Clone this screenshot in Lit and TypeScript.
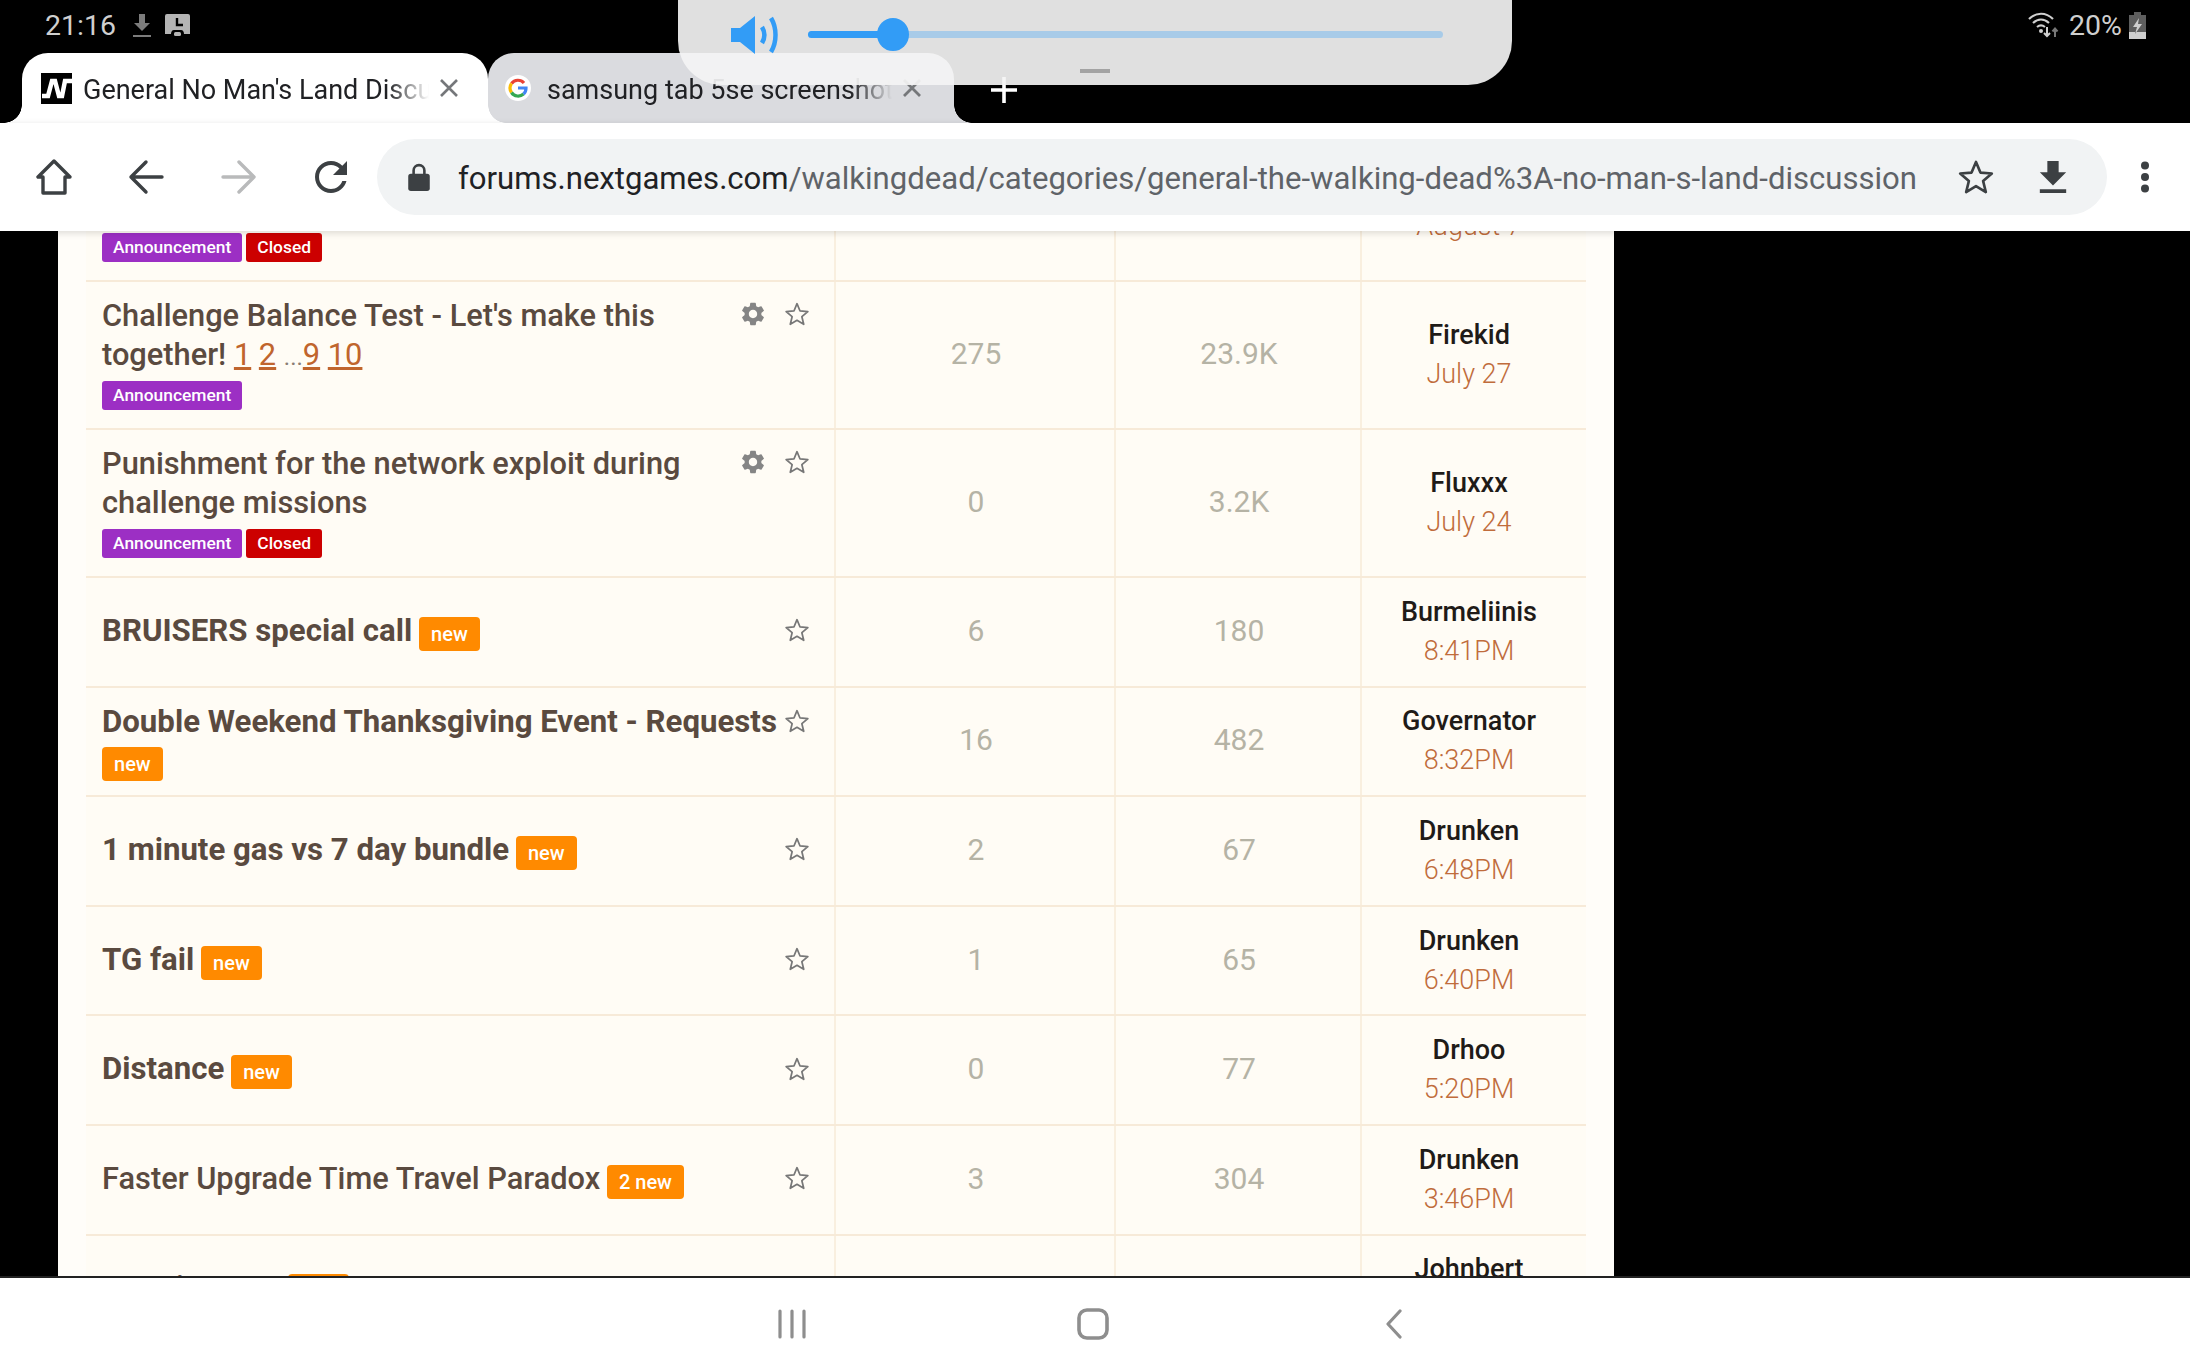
import { LitElement, html, css } from 'lit'
import { customElement } from 'lit/decorators.js'

const star = html`<svg class="star" viewBox="0 0 24 24"><polygon points="12,2.5 14.8,9.2 22,9.8 16.5,14.5 18.2,21.5 12,17.8 5.8,21.5 7.5,14.5 2,9.8 9.2,9.2" fill="none" stroke="currentColor" stroke-width="1.6" stroke-linejoin="round"/></svg>`
const gear = html`<svg class="gear" viewBox="0 0 24 24"><path fill="currentColor" d="M19.14 12.94c.04-.3.06-.61.06-.94 0-.32-.02-.64-.07-.94l2.03-1.58a.49.49 0 0 0 .12-.61l-1.92-3.32a.488.488 0 0 0-.59-.22l-2.39.96c-.5-.38-1.03-.7-1.62-.94l-.36-2.54a.484.484 0 0 0-.48-.41h-3.84c-.24 0-.43.17-.47.41l-.36 2.54c-.59.24-1.13.57-1.62.94l-2.39-.96c-.22-.08-.47 0-.59.22L2.74 8.87c-.12.21-.08.47.12.61l2.03 1.58c-.05.3-.09.63-.09.94s.02.64.07.94l-2.03 1.58a.49.49 0 0 0-.12.61l1.92 3.32c.12.22.37.29.59.22l2.39-.96c.5.38 1.03.7 1.62.94l.36 2.54c.05.24.24.41.48.41h3.84c.24 0 .44-.17.47-.41l.36-2.54c.59-.24 1.13-.56 1.62-.94l2.39.96c.22.08.47 0 .59-.22l1.92-3.32c.12-.22.07-.47-.12-.61l-2.01-1.58zM12 15.6c-1.98 0-3.6-1.62-3.6-3.6s1.62-3.6 3.6-3.6 3.6 1.62 3.6 3.6-1.62 3.6-3.6 3.6z"/></svg>`

const pages = html` <a>1</a> <a>2</a> <span class="dots">...</span><a>9</a> <a>10</a>`

const rows = [
  { title: 'Update notes for the August event and what is coming up next in game', weight: 'reg', tags: ['a', 'c'], gear: true, tall: true, views: '41', reads: '5.1K', user: 'Fluxxx', when: 'August 7' },
  { title: 'Challenge Balance Test - Let\'s make this together!', pages: true, weight: 'reg', tags: ['a'], gear: true, tall: true, views: '275', reads: '23.9K', user: 'Firekid', when: 'July 27' },
  { title: 'Punishment for the network exploit during challenge missions', weight: 'reg', tags: ['a', 'c'], gear: true, tall: true, views: '0', reads: '3.2K', user: 'Fluxxx', when: 'July 24' },
  { title: 'BRUISERS special call', weight: 'bold', badge: 'new', views: '6', reads: '180', user: 'Burmeliinis', when: '8:41PM' },
  { title: 'Double Weekend Thanksgiving Event - Requests', weight: 'bold', badge: 'new', views: '16', reads: '482', user: 'Governator', when: '8:32PM' },
  { title: '1 minute gas vs 7 day bundle', weight: 'bold', badge: 'new', views: '2', reads: '67', user: 'Drunken', when: '6:48PM' },
  { title: 'TG fail', weight: 'bold', badge: 'new', views: '1', reads: '65', user: 'Drunken', when: '6:40PM' },
  { title: 'Distance', weight: 'bold', badge: 'new', views: '0', reads: '77', user: 'Drhoo', when: '5:20PM' },
  { title: 'Faster Upgrade Time Travel Paradox', weight: 'reg', badge: '2 new', views: '3', reads: '304', user: 'Drunken', when: '3:46PM' },
  { title: 'Morning Gas', weight: 'bold', badge: 'new', views: '12', reads: '312', user: 'Johnbert', when: '2:58PM' }
]

@customElement('app-root')
export class AppRoot extends LitElement {
  static styles = css`
    :host {
      display: flex;
      flex-direction: column;
      position: relative;
      width: 2190px;
      height: 1369px;
      overflow: hidden;
      background: #000;
      font-family: Roboto, 'Liberation Sans', sans-serif;
    }

    svg {
      display: block;
      flex: none;
    }

    .status {
      display: flex;
      align-items: center;
      height: 53px;
      padding: 0 44px 3px 45px;
      box-sizing: border-box;
      color: #cfcfcf;
      font-size: 28.5px;
    }

    .status .dl {
      margin-left: 16px;
    }

    .status .shot {
      margin-left: 13px;
    }

    .status .right {
      margin-left: auto;
      display: flex;
      align-items: center;
      gap: 7px;
    }

    .volume {
      position: absolute;
      left: 678px;
      top: 0;
      width: 834px;
      height: 85px;
      border-radius: 0 0 44px 44px;
      background: rgba(244, 244, 244, 0.918);
      z-index: 3;
    }

    .volume .speaker {
      position: absolute;
      left: 53px;
      top: 15px;
    }

    .volume .track {
      position: absolute;
      left: 130px;
      top: 31px;
      width: 635px;
      height: 7px;
      border-radius: 4px;
      background: #a8cbe8;
    }

    .volume .fill {
      height: 100%;
      border-radius: 4px;
      background: #329cf6;
    }

    .volume .thumb {
      position: absolute;
      left: 69px;
      top: -13px;
      width: 32px;
      height: 33px;
      border-radius: 50%;
      background: #329cf6;
    }

    .volume .grip {
      position: absolute;
      left: 402px;
      top: 69px;
      width: 30px;
      height: 4px;
      background: #a3a3a3;
    }

    .tabs {
      display: flex;
      height: 70px;
      padding-left: 22px;
    }

    .tab {
      position: relative;
      display: flex;
      align-items: center;
      box-sizing: border-box;
      border-radius: 26px 26px 0 0;
      color: #202124;
      font-size: 27px;
    }

    .tab.active {
      width: 466px;
      padding: 0 29px 0 19px;
      background: #fff;
      z-index: 1;
    }

    .tab::after {
      content: '';
      position: absolute;
      bottom: 0;
      right: -18px;
      width: 18px;
      height: 18px;
      transform: scaleX(-1);
      background: radial-gradient(circle at 0 0, transparent 17.5px, #dadbdf 18px);
    }

    .tab.active::before {
      content: '';
      position: absolute;
      bottom: 0;
      left: -18px;
      width: 18px;
      height: 18px;
      background: radial-gradient(circle at 0 0, transparent 17.5px, #fff 18px);
    }

    .tab.active::after {
      background: radial-gradient(circle at 0 0, transparent 17.5px, #fff 18px);
    }

    .tab.other {
      width: 466px;
      padding: 0 32px 0 17px;
      background: #dadbdf;
    }

    .tab .label {
      flex: 1;
      min-width: 0;
      margin: 4px 0 0 11px;
      white-space: nowrap;
      overflow: hidden;
      -webkit-mask-image: linear-gradient(to right, #000 88%, transparent 100%);
      mask-image: linear-gradient(to right, #000 88%, transparent 100%);
    }

    .tab.other .label {
      margin-left: 16px;
    }

    .tab .close {
      margin-left: 10px;
      color: #75777a;
    }

    .plus {
      margin-left: 37px;
      margin-top: 24px;
    }

    .toolbar {
      position: relative;
      z-index: 2;
      display: flex;
      align-items: center;
      height: 108px;
      padding: 0 0 0 36px;
      box-sizing: border-box;
      background: #fff;
      color: #3c4043;
      box-shadow: 0 2px 7px rgba(0, 0, 0, 0.14);
    }

    .toolbar .nav-icons {
      display: flex;
      gap: 56.4px;
    }

    .omni {
      display: flex;
      align-items: center;
      width: 1730px;
      height: 76px;
      margin-left: 27.800px;
      padding: 0 0 0 29px;
      box-sizing: border-box;
      border-radius: 38px;
      background: #f1f3f4;
    }

    .url {
      margin: 2px 0 0 26px;
      width: 1499.500px;
      font-size: 31.1px;
      color: #5f6368;
      white-space: nowrap;
    }

    .url b {
      font-weight: 400;
      color: #202124;
    }

    .omni .odl {
      margin-left: 44px;
    }

    .kebab {
      margin-left: 33px;
    }

    .content {
      flex: 1;
      min-height: 0;
      overflow: hidden;
    }

    .page {
      width: 1556px;
      margin: -97px 0 0 58px;
      padding: 0 28px;
      box-sizing: border-box;
      background: #fffdf9;
    }

    .row {
      display: grid;
      grid-template-columns: 750px 280px 246px 224px;
      height: 109.6px;
      box-sizing: border-box;
      background: #fffcf5;
      border-bottom: 2px solid #f7ead8;
    }

    .row.tall {
      height: 148px;
    }

    .cell {
      display: flex;
      align-items: center;
      justify-content: center;
      padding: 0 0 3px 2px;
      box-sizing: border-box;
      border-right: 2px solid #f9efdf;
      color: #b5b3a5;
      font-size: 30px;
      font-weight: 400;
    }

    .cell.topic {
      justify-content: flex-start;
      padding: 0 24px 3px 16px;
      gap: 6px;
      align-items: center;
    }

    .row.tall .cell.topic {
      align-items: flex-start;
      padding-top: 14px;
    }

    .row.tall .acts {
      margin-top: -2px;
    }

    .row.wraps .cell.topic {
      align-items: flex-start;
      padding-top: 14px;
    }

    .cell.last {
      flex-direction: column;
      border-right: none;
      padding: 0 10px 0 0;
      line-height: 39px;
      font-size: 27px;
    }

    .user {
      color: #1f1b18;
      font-weight: 500;
    }

    .when {
      color: #c06c3c;
      font-weight: 300;
    }

    .main {
      flex: 1;
      min-width: 0;
      color: #5a4a3f;
      line-height: 39px;
    }

    .main.reg {
      font-size: 30.8px;
      font-weight: 500;
    }

    .main.bold {
      font-size: 31.2px;
      font-weight: 700;
    }

    .main a {
      color: #c0652d;
      font-weight: 400;
      text-decoration: underline;
    }

    .main .dots {
      font-size: 24px;
      font-weight: 400;
      line-height: 0;
      color: #8a7d73;
    }

    .tags {
      display: flex;
      gap: 4px;
      margin-top: 7px;
    }

    .tag {
      height: 29px;
      padding: 0 11px;
      border-radius: 3px;
      color: #fff;
      font-size: 17.4px;
      font-weight: 500;
      line-height: 29px;
    }

    .tag.a {
      background: #9c2fc4;
    }

    .tag.c {
      background: #cc0000;
    }

    .badge {
      display: inline-block;
      height: 34px;
      margin: 0 0 -6px -1px;
      padding: 0 12px;
      border-radius: 4px;
      background: #ff8a00;
      color: #fff;
      font-size: 20px;
      font-weight: 500;
      line-height: 34px;
    }

    .wraps .badge {
      margin-left: 0;
    }

    .acts {
      display: flex;
      align-items: center;
      flex: none;
      gap: 17px;
      height: 39px;
      color: #777;
    }

    .gear {
      width: 28px;
      height: 28px;
      color: #858585;
    }

    .star {
      width: 26px;
      height: 26px;
    }

    .bottom {
      display: grid;
      grid-template-columns: repeat(3, 301px);
      justify-content: center;
      justify-items: center;
      align-items: center;
      height: 93px;
      padding-right: 4px;
      box-sizing: border-box;
      background: #fff;
      border-top: 2px solid #222;
      color: #8e8e8e;
    }
  `

  private renderRow(r: any) {
    return html`
      <div class="row ${r.tall ? 'tall' : ''} ${r.title.startsWith('Double') ? 'wraps' : ''}">
        <div class="cell topic">
          <div class="main ${r.weight}">
            ${r.title}${r.pages ? pages : ''}
            ${r.badge ? html`<span class="badge">${r.badge}</span>` : ''}
            ${r.tags
              ? html`<div class="tags">
                  ${r.tags.map((t: string) => html`<span class="tag ${t}">${t === 'a' ? 'Announcement' : 'Closed'}</span>`)}
                </div>`
              : ''}
          </div>
          <div class="acts">${r.gear ? gear : ''}${star}</div>
        </div>
        <div class="cell">${r.views}</div>
        <div class="cell">${r.reads}</div>
        <div class="cell last">
          <span class="user">${r.user}</span>
          <span class="when">${r.when}</span>
        </div>
      </div>
    `
  }

  render() {
    return html`
      <div class="status">
        <span>21:16</span>
        <svg class="dl" width="20" height="26" viewBox="0 0 20 26">
          <path fill="#7c7c7c" d="M7 2h6v9h5l-8 8-8-8h5zM1 23h18v2H1z" />
        </svg>
        <svg class="shot" width="25" height="22" viewBox="0 0 25 22">
          <path fill="#b4b4b4" d="M2 0h21a2 2 0 0 1 2 2v18h-6c0-2-1-4-3-4H9c-2 0-3 2-3 4H0V2a2 2 0 0 1 2-2z" />
          <path fill="none" stroke="#000" stroke-width="2.4" d="M12 4v7h6" />
          <rect x="9" y="18" width="7" height="4" rx="1.5" fill="#b4b4b4" />
        </svg>
        <div class="right">
          <svg width="34" height="28" viewBox="0 0 34 28" fill="none" stroke="#cfcfcf" stroke-width="2.2">
            <path d="M1 8c7-7 17-7 24 0M5 12c5-4.500 11-4.500 16 0M9 16c2.500-2 5.500-2 8 0" />
            <circle cx="13" cy="20" r="2" fill="#cfcfcf" stroke="none" />
            <path d="M19 16v9M16 22l3 3 3-3" stroke-width="2" />
            <path d="M27 26v-8M24.500 20.500l2.500-3 2.500 3" stroke="#777" stroke-width="2" />
          </svg>
          <span>20%</span>
          <svg width="17" height="27" viewBox="0 0 17 27">
            <path fill="#5e5e5e" d="M5 0h7v3h5v24H0V3h5z" />
            <path fill="#cfcfcf" d="M0 20h17v7H0zM10 6l-6 9h4l-2 7 7-10H9z" />
          </svg>
        </div>
      </div>

      <div class="volume">
        <svg class="speaker" width="50" height="40" viewBox="0 0 50 40">
          <path fill="#329cf6" d="M0 13h9L24 1v38L9 27H0z" />
          <path fill="none" stroke="#329cf6" stroke-width="4.500" d="M31 12c3 5 3 11 0 16M40 3c6 10 6 24 0 34" />
        </svg>
        <div class="track">
          <div class="fill" style="width: 85px"></div>
          <div class="thumb"></div>
        </div>
        <div class="grip"></div>
      </div>

      <div class="tabs">
        <div class="tab active">
          <svg width="31" height="31" viewBox="0 0 31 31">
            <rect width="31" height="31" fill="#000" />
            <path d="M1 23h6l4-15h3l4 15h3l3-15h7" fill="none" stroke="#fff" stroke-width="4.500" />
          </svg>
          <span class="label">General No Man's Land Discussion</span>
          <svg class="close" width="20" height="20" viewBox="0 0 20 20">
            <path stroke="currentColor" stroke-width="2.6" d="M2 2l16 16M18 2L2 18" />
          </svg>
        </div>
        <div class="tab other">
          <svg width="26" height="26" viewBox="0 0 26 26">
            <circle cx="13" cy="13" r="13" fill="#fff" />
            <g fill="none" stroke-width="3.2">
              <path stroke="#ea4335" d="M19 8a8 8 0 0 0-12.500 0.500" />
              <path stroke="#fbbc05" d="M6.500 8.500a8 8 0 0 0 0 9" />
              <path stroke="#34a853" d="M6.500 17.500a8 8 0 0 0 12 1.500" />
              <path stroke="#4285f4" d="M18.500 19a8 8 0 0 0 2.500-6h-8" />
            </g>
          </svg>
          <span class="label">samsung tab 5se screenshot - Google Search</span>
          <svg class="close" width="20" height="20" viewBox="0 0 20 20">
            <path stroke="currentColor" stroke-width="2.800" d="M2 2l16 16M18 2L2 18" />
          </svg>
        </div>
        <svg class="plus" width="26" height="26" viewBox="0 0 26 26">
          <path stroke="#fff" stroke-width="3.6" d="M13 0v26M0 13h26" />
        </svg>
      </div>

      <div class="toolbar">
        <div class="nav-icons">
          <svg width="36" height="36" viewBox="0 0 36 36" fill="none" stroke="currentColor" stroke-width="3.4" stroke-linejoin="round" stroke-linecap="round">
            <path d="M18 2L2 18h5v16h22V18h5z" />
          </svg>
          <svg width="36" height="36" viewBox="0 0 36 36" fill="none" stroke="currentColor" stroke-width="3.4" stroke-linejoin="round" stroke-linecap="round">
            <path d="M34 18H3M18 3L3 18l15 15" />
          </svg>
          <svg width="36" height="36" viewBox="0 0 36 36" fill="none" stroke="#b9babb" stroke-width="3.4" stroke-linejoin="round" stroke-linecap="round">
            <path d="M2 18h31M18 3l15 15-15 15" />
          </svg>
          <svg width="36" height="36" viewBox="3 3 18 18">
            <path fill="currentColor" d="M17.650 6.350C16.200 4.900 14.210 4 12 4c-4.420 0-7.990 3.580-7.990 8s3.570 8 7.990 8c3.730 0 6.840-2.550 7.730-6h-2.080c-.82 2.330-3.040 4-5.650 4-3.310 0-6-2.690-6-6s2.690-6 6-6c1.660 0 3.140.69 4.220 1.780L13 11h7V4l-2.350 2.350z" />
          </svg>
        </div>
        <div class="omni">
          <svg width="26" height="28" viewBox="0 0 20 26">
            <path fill="none" stroke="currentColor" stroke-width="2.400" d="M5 11V7a5 5 0 0 1 10 0v4" />
            <rect x="0" y="10" width="20" height="16" rx="2.500" fill="currentColor" />
          </svg>
          <div class="url"><b>forums.nextgames.com</b>/walkingdead/categories/general-the-walking-dead%3A-no-man-s-land-discussion</div>
          <svg width="38" height="38" viewBox="0 0 24 24">
            <polygon points="12,2.500 14.800,9.200 22,9.800 16.500,14.500 18.200,21.500 12,17.800 5.800,21.500 7.500,14.500 2,9.800 9.200,9.200" fill="none" stroke="currentColor" stroke-width="1.700" stroke-linejoin="round" />
          </svg>
          <svg class="odl" width="28" height="32" viewBox="5 3 14 17">
            <path fill="currentColor" d="M19 9h-4V3H9v6H5l7 7 7-7zM5 18v2h14v-2H5z" />
          </svg>
        </div>
        <svg class="kebab" width="10" height="32" viewBox="0 0 10 32">
          <circle cx="5" cy="4.500" r="4" fill="currentColor" />
          <circle cx="5" cy="16" r="4" fill="currentColor" />
          <circle cx="5" cy="27.500" r="4" fill="currentColor" />
        </svg>
      </div>

      <div class="content">
        <div class="page">${rows.map((r) => this.renderRow(r))}</div>
      </div>

      <div class="bottom">
        <svg width="28" height="30" viewBox="0 0 28 30">
          <path stroke="currentColor" stroke-width="3.200" stroke-linecap="round" d="M2 2v26M14 2v26M26 2v26" />
        </svg>
        <svg width="32" height="32" viewBox="0 0 32 32">
          <rect x="2" y="2" width="28" height="28" rx="8" fill="none" stroke="currentColor" stroke-width="3.600" />
        </svg>
        <svg width="18" height="30" viewBox="0 0 18 30">
          <path fill="none" stroke="currentColor" stroke-width="3.200" stroke-linecap="round" stroke-linejoin="round" d="M15 2L3 15l12 13" />
        </svg>
      </div>
    `
  }
}
